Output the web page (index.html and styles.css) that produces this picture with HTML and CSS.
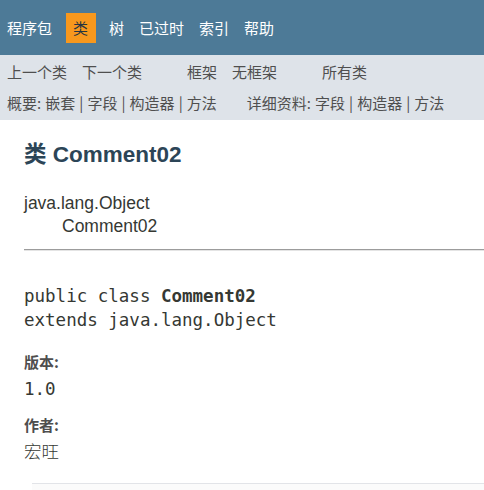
FILE: index.html
```html
<!DOCTYPE html>
<html lang="zh">
<head>
<meta charset="utf-8">
<title>Comment02</title>
<link rel="stylesheet" href="styles.css">
</head>
<body>
<header class="top-nav">
  <ul class="nav-list">
    <li>程序包</li>
    <li class="active">类</li>
    <li>树</li>
    <li>已过时</li>
    <li>索引</li>
    <li>帮助</li>
  </ul>
</header>
<nav class="sub-nav">
  <div class="sub-row">
    <ul class="sub-group">
      <li>上一个类</li>
      <li>下一个类</li>
    </ul>
    <ul class="sub-group">
      <li>框架</li>
      <li>无框架</li>
    </ul>
    <ul class="sub-group">
      <li>所有类</li>
    </ul>
  </div>
  <div class="sub-row second">
    <div class="sub-text">概要:&nbsp;嵌套&nbsp;|&nbsp;字段&nbsp;|&nbsp;构造器&nbsp;|&nbsp;方法</div>
    <div class="sub-text detail">详细资料:&nbsp;字段&nbsp;|&nbsp;构造器&nbsp;|&nbsp;方法</div>
  </div>
</nav>
<main class="content">
  <h2 class="title">类 Comment02</h2>
  <div class="inheritance">
    <div>java.lang.Object</div>
    <div class="child">Comment02</div>
  </div>
  <hr class="rule">
  <pre class="signature">public class <b>Comment02</b>
extends java.lang.Object</pre>
  <dl class="tags">
    <dt>版本:</dt>
    <dd>1.0</dd>
    <dt>作者:</dt>
    <dd>宏旺</dd>
  </dl>
  <div class="summary"></div>
</main>
</body>
</html>
```

FILE: styles.css
```css
html, body {
  margin: 0;
  padding: 0;
  background: #ffffff;
}
body {
  font-family: "Liberation Sans", "Noto Sans CJK SC", sans-serif;
  color: #353833;
  overflow: hidden;
}
ul {
  list-style: none;
  margin: 0;
  padding: 0;
}
.top-nav {
  background: #4d7a97;
  height: 55px;
  box-sizing: border-box;
  padding-top: 13px;
}
.nav-list {
  display: flex;
  font-family: "Noto Sans CJK SC", sans-serif;
  font-size: 15px;
  color: #ffffff;
}
.nav-list li {
  padding: 0 7.5px;
  height: 30px;
  line-height: 30px;
}
.nav-list li:first-child {
  padding-left: 7px;
}
.nav-list li.active {
  background: #f8981d;
  color: #253441;
  margin: 0 6px;
  padding: 0 7.5px;
}
.sub-nav {
  background: #dee3e9;
  height: 65px;
  box-sizing: border-box;
  padding-top: 7px;
  font-family: "Noto Sans CJK SC", sans-serif;
  font-size: 15px;
  color: #4f4f4f;
}
.sub-row {
  display: flex;
  height: 20px;
  line-height: 20px;
}
.sub-row.second {
  margin-top: 11px;
}
.sub-group {
  display: flex;
  margin-right: 30px;
}
.sub-group li {
  padding: 0 7.5px;
}
.sub-group:first-child li:first-child {
  padding-left: 7px;
}
.sub-text {
  padding-left: 7px;
  white-space: nowrap;
  word-spacing: 0.7px;
}
.sub-text.detail {
  padding-left: 30px;
}
.content {
  padding: 20px 0 0 24px;
}
.title {
  margin: 0;
  font-family: "Liberation Sans", "Noto Sans CJK SC", sans-serif;
  font-size: 22.5px;
  line-height: 30px;
  font-weight: bold;
  color: #2c4557;
}
.inheritance {
  margin-top: 22px;
  font-size: 17.5px;
  line-height: 23px;
}
.inheritance .child {
  padding-left: 38px;
}
.rule {
  margin: 11px 0 0 0;
  border: 0;
  border-top: 1px solid #9c9c9c;
  border-bottom: 1px solid #e4e4e4;
  height: 0;
}
.signature {
  margin: 33px 0 0 0;
  font-family: "DejaVu Sans Mono", monospace;
  font-size: 17.5px;
  line-height: 24px;
  color: #353833;
}
.signature b {
  font-weight: bold;
}
.tags {
  margin: 20px 0 0 0;
}
.tags dt {
  font-family: "Noto Sans CJK SC", sans-serif;
  font-size: 15px;
  line-height: 20px;
  font-weight: bold;
  color: #4e4e4e;
  margin-top: 14px;
}
.tags dt:first-child {
  margin-top: 0;
}
.tags dd {
  margin: 5px 0 0 0;
  font-family: "DejaVu Sans Mono", "Noto Sans CJK SC", monospace;
  font-size: 17.5px;
  line-height: 24px;
  color: #353833;
}
.tags dd:last-child {
  font-weight: 300;
}
.summary {
  margin: 19px 0 0 8px;
  height: 20px;
  border-top: 1px solid #e2e4e8;
  background: #fbfbfb;
}
```
